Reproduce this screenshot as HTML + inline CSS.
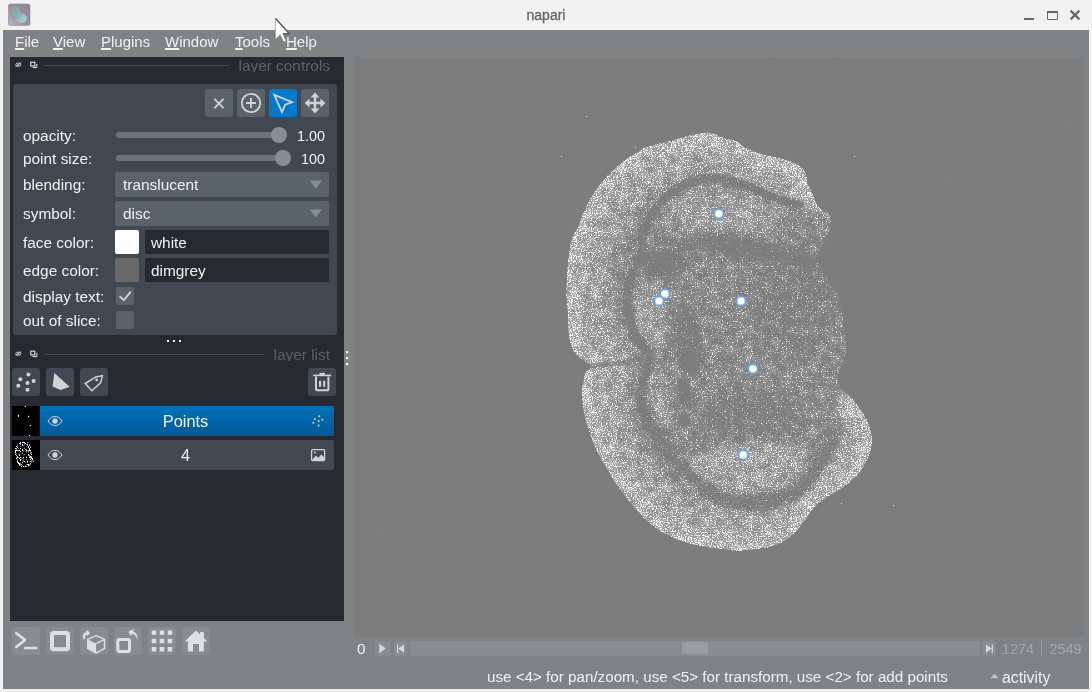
<!DOCTYPE html>
<html lang="en">
<head>
<meta charset="utf-8">
<title>napari</title>
<style>
*{box-sizing:border-box;margin:0;padding:0}
html,body{width:1092px;height:692px;overflow:hidden;background:#f2f2f2}
body{font-family:"Liberation Sans","DejaVu Sans",sans-serif;font-size:14px;color:#f0f1f2;position:relative}
.abs{position:absolute}
#titlebar{left:0;top:0;width:1092px;height:30px;background:#f2f2f2}
#title{left:0;top:6px;width:1092px;text-align:center;color:#666;font-size:14px;line-height:18px;-webkit-text-stroke:0.3px #666}
#win{left:3px;top:30px;width:1086px;height:659px;background:#818284}
.menu{top:33px;font-size:15px;line-height:18px;color:#f0f1f2;white-space:nowrap}
.menu u{text-decoration:underline;text-underline-offset:0.8px;text-decoration-thickness:1.6px}
#dock{left:10px;top:57px;width:334px;height:564px;background:#262930}
.docktitle{color:#5a626c;font-size:15.4px;line-height:18px;white-space:nowrap;text-align:right;height:14.5px;overflow:hidden}
.dline{height:1px;background:#414851}
#controls{left:13px;top:84px;width:324px;height:251px;background:#414851;border-radius:3px}
.lbl{font-size:15.4px;line-height:18px;color:#f0f1f2;white-space:nowrap}
.btn{width:28px;height:28px;background:#5a626c;border-radius:3px}
.lb{background:#414851}
.track{height:6px;background:#6a7380;border-radius:3px}
.handle{width:16px;height:16px;border-radius:8px;background:#868e93}
.combo{left:115px;width:214px;height:25px;background:#5a626c;border-radius:2px}
.edit{left:145px;width:184px;height:24px;background:#262930;border-radius:2px}
.swatch{left:115px;width:24px;height:24px;border-radius:2px}
.chk{left:116px;width:18px;height:18px;background:#5a626c;border-radius:2px}
.row{left:12px;width:322px;height:30px;border-radius:2px}
.thumb{left:12px;width:28px;height:30px;background:#000;overflow:hidden}
.vbtn{top:627px;width:28px;height:28px;background:#8a8b8d;border-radius:3px}
#canvas{left:354px;top:57px;width:730px;height:580px;background:#7d7d7d;overflow:hidden}
.dim{color:#a3a7ab}
.num{font-size:14.4px}
.st{font-size:15.2px}
.pb{top:641px;width:15px;height:15px;background:#8a8b8e;border-radius:2px}
</style>
</head>
<body>
<div id="root" class="abs" style="left:0;top:0;width:1092px;height:692px;will-change:transform;opacity:0.999">
<div id="titlebar" class="abs"></div>
<div id="title" class="abs">napari</div>
<div id="win" class="abs"></div>
<svg class="abs" style="left:0;top:0" width="1092" height="30" viewBox="0 0 1092 30">
<defs>
<linearGradient id="ig" x1="1" y1="0" x2="0" y2="1"><stop offset="0" stop-color="#8b8591"/><stop offset="0.6" stop-color="#9a94a2"/><stop offset="1" stop-color="#bdb5cb"/></linearGradient>
<linearGradient id="bg2" x1="0" y1="0" x2="1" y2="1"><stop offset="0" stop-color="#70a5a9"/><stop offset="0.5" stop-color="#87b6b8"/><stop offset="1" stop-color="#abe2e0"/></linearGradient>
</defs>
<rect x="8.5" y="4" width="21.5" height="21.5" rx="1.8" fill="url(#ig)" stroke="#8d8794" stroke-width="0.6"/>
<path d="M12 10.6C12 8.4 13.6 7.2 15.4 7.2C17.4 7.2 18.5 8.6 18.6 10.4C18.7 12.4 19.6 13.3 21.6 13.6C24.4 14 26.6 15.4 26.6 18.2C26.6 21 24.4 22.8 21.6 22.8C18.6 22.8 17.2 21.2 16.4 18.8C15.8 17 14.8 15.6 13.4 14.2C12.4 13.2 12 12 12 10.6Z" fill="url(#bg2)" stroke="#c3bda6" stroke-width="0.5"/>
<rect x="1024" y="18" width="10" height="2" fill="#686868"/>
<path d="M1047.5 11.5h10v8h-10z" stroke="#686868" stroke-width="1" fill="none"/><rect x="1047" y="11" width="11" height="2" fill="#686868"/>
<path d="M1070.6 10.6l8.8 8.8M1079.4 10.6l-8.8 8.8" stroke="#686868" stroke-width="2.2" fill="none"/>
</svg>

<!-- menubar -->
<div class="abs menu" style="left:15px"><u>F</u>ile</div>
<div class="abs menu" style="left:53px"><u>V</u>iew</div>
<div class="abs menu" style="left:101px"><u>P</u>lugins</div>
<div class="abs menu" style="left:165px"><u>W</u>indow</div>
<div class="abs menu" style="left:235px"><u>T</u>ools</div>
<div class="abs menu" style="left:286px"><u>H</u>elp</div>

<!-- dock -->
<div id="dock" class="abs"></div>
<svg class="abs" style="left:10px;top:57px" width="40" height="16" viewBox="0 0 40 16"><g id="dti"><ellipse cx="8.3" cy="7.7" rx="2.6" ry="1.6" stroke="#dcdddf" stroke-width="0.9" fill="none"/><circle cx="8.3" cy="7.7" r="0.8" fill="#dcdddf"/><path d="M5.6 9.6L11.2 5.6" stroke="#dcdddf" stroke-width="0.9"/><rect x="20.8" y="5.2" width="4" height="3.8" stroke="#e4e5e6" stroke-width="1.1" fill="none"/><path d="M22.6 10.6h4.2V6.8" stroke="#e4e5e6" stroke-width="1" fill="none"/></g></svg>
<div class="abs dline" style="left:44px;top:65px;width:185px"></div>
<div class="abs docktitle" style="left:200px;top:57px;width:130px">layer controls</div>
<div id="controls" class="abs"></div>

<div class="abs btn" style="left:205px;top:89px"><svg width="28" height="28" viewBox="0 0 28 28"><path d="M9.4 9.9l9.2 9.2M18.6 9.9l-9.2 9.2" stroke="#d1d2d4" stroke-width="1.9" fill="none"/></svg></div>
<div class="abs btn" style="left:237px;top:89px"><svg width="28" height="28" viewBox="0 0 28 28"><circle cx="14" cy="14" r="9.2" stroke="#d1d2d4" stroke-width="1.8" fill="none"/><path d="M14 9v10M9 14h10" stroke="#d1d2d4" stroke-width="1.9" fill="none"/></svg></div>
<div class="abs btn" style="left:269px;top:89px;background:#007acc"><svg width="28" height="28" viewBox="0 0 28 28"><path d="M5.2 5.8L23.2 13.1L16.2 15.6L13 23.2Z" stroke="#d1d2d4" stroke-width="1.8" fill="none" stroke-linejoin="miter"/></svg></div>
<div class="abs btn" style="left:301px;top:89px"><svg width="28" height="28" viewBox="0 0 28 28"><path d="M14 6v16M6 14h16" stroke="#d1d2d4" stroke-width="2.4" fill="none"/><path d="M14 3.6l4.4 5h-8.8zM14 24.4l4.4-5h-8.8zM3.6 14l5-4.4v8.8zM24.4 14l-5-4.4v8.8z" fill="#d1d2d4"/></svg></div>

<div class="abs lbl" style="left:23px;top:127px">opacity:</div>
<div class="abs track" style="left:116px;top:132px;width:170px"></div>
<div class="abs handle" style="left:271px;top:127px"></div>
<div class="abs lbl num" style="left:280px;top:127px;width:45px;text-align:right">1.00</div>

<div class="abs lbl" style="left:23px;top:150px">point size:</div>
<div class="abs track" style="left:116px;top:155px;width:170px"></div>
<div class="abs handle" style="left:275px;top:150px"></div>
<div class="abs lbl num" style="left:280px;top:150px;width:45px;text-align:right">100</div>

<div class="abs lbl" style="left:23px;top:176px">blending:</div>
<div class="abs combo" style="top:172px"><svg class="abs" style="left:194px;top:8px" width="14" height="9" viewBox="0 0 14 9"><path d="M0.6 0.4h12.4L6.8 8.6z" fill="#868e93"/></svg></div>
<div class="abs lbl" style="left:123px;top:176px">translucent</div>

<div class="abs lbl" style="left:23px;top:205px">symbol:</div>
<div class="abs combo" style="top:201px"><svg class="abs" style="left:194px;top:8px" width="14" height="9" viewBox="0 0 14 9"><path d="M0.6 0.4h12.4L6.8 8.6z" fill="#868e93"/></svg></div>
<div class="abs lbl" style="left:123px;top:205px">disc</div>

<div class="abs lbl" style="left:23px;top:234px">face color:</div>
<div class="abs swatch" style="top:230px;background:#fff"></div>
<div class="abs edit" style="top:230px"></div>
<div class="abs lbl" style="left:151px;top:234px">white</div>

<div class="abs lbl" style="left:23px;top:262px">edge color:</div>
<div class="abs swatch" style="top:258px;background:#696969"></div>
<div class="abs edit" style="top:258px"></div>
<div class="abs lbl" style="left:151px;top:262px">dimgrey</div>

<div class="abs lbl" style="left:23px;top:288px">display text:</div>
<div class="abs chk" style="top:287px"><svg width="18" height="18" viewBox="0 0 18 18"><path d="M3.6 9.2L7.8 13.2L14.8 4.6" stroke="#d1d2d4" stroke-width="1.9" fill="none"/></svg></div>
<div class="abs lbl" style="left:23px;top:312px">out of slice:</div>
<div class="abs chk" style="top:311px"></div>

<svg class="abs" style="left:10px;top:346px" width="40" height="16" viewBox="0 0 40 16"><use href="#dti"/></svg>
<div class="abs dline" style="left:44px;top:354px;width:220px"></div>
<svg class="abs" style="left:165px;top:338px" width="20" height="6" viewBox="0 0 20 6" fill="#f0f1f2"><rect x="2" y="2" width="2" height="2"/><rect x="8" y="2" width="2" height="2"/><rect x="14" y="2" width="2" height="2"/></svg>
<svg class="abs" style="left:345px;top:350px" width="6" height="18" viewBox="0 0 6 18" fill="#ffffff"><rect x="1" y="1" width="2.2" height="2.2"/><rect x="1" y="7" width="2.2" height="2.2"/><rect x="1" y="13" width="2.2" height="2.2"/></svg>
<div class="abs docktitle" style="left:200px;top:346px;width:130px">layer list</div>

<div class="abs btn lb" style="left:12px;top:368px"><svg width="28" height="28" viewBox="0 0 28 28" fill="#d1d2d4"><circle cx="16.4" cy="6.6" r="2"/><circle cx="8.4" cy="11.3" r="2"/><circle cx="21.6" cy="13" r="2"/><circle cx="15.5" cy="14.9" r="2"/><circle cx="6.3" cy="17.7" r="2"/><circle cx="15.5" cy="21.8" r="2"/></svg></div>
<div class="abs btn lb" style="left:46px;top:368px"><svg width="28" height="28" viewBox="0 0 28 28"><path d="M8.4 5.1L23.6 18.7L14.5 22.1L6.5 18.4Z" fill="#d1d2d4"/></svg></div>
<div class="abs btn lb" style="left:80px;top:368px"><svg width="28" height="28" viewBox="0 0 28 28"><path d="M22.4 7.6L20.6 14.9L11.8 22.8L5.2 15.5L15.9 8.9Z" stroke="#d1d2d4" stroke-width="1.5" fill="none"/><circle cx="16.7" cy="11.9" r="1.3" fill="#d1d2d4"/></svg></div>
<div class="abs btn lb" style="left:308px;top:368px"><svg width="28" height="28" viewBox="0 0 28 28"><path d="M5.2 7.4h17.9" stroke="#d1d2d4" stroke-width="1.6"/><rect x="11.4" y="4.9" width="5.6" height="2" fill="#d1d2d4"/><path d="M8 8.4v12.3a1.6 1.6 0 0 0 1.6 1.6h9.2a1.6 1.6 0 0 0 1.6-1.6V8.4" stroke="#d1d2d4" stroke-width="2" fill="none"/><rect x="11" y="12.8" width="2.1" height="6" fill="#d1d2d4"/><rect x="15.1" y="12.8" width="2.1" height="6" fill="#d1d2d4"/></svg></div>

<div class="abs row" style="top:406px;background:linear-gradient(#0070b8,#0067aa 45%,#005a96)"></div>
<div class="abs thumb" style="top:406px"><svg width="28" height="30" viewBox="0 0 28 30" fill="#fff"><rect x="12.8" y="0" width="1.2" height="1"/><rect x="5.8" y="8.8" width="1.2" height="2"/><rect x="16" y="9.8" width="1.2" height="1.2"/><rect x="17.8" y="19" width="1.2" height="1.2"/><rect x="16.8" y="29" width="1.2" height="1"/></svg></div>
<svg class="abs eye" style="left:47px;top:415px" width="16" height="12" viewBox="0 0 16 12"><g id="eye"><path d="M1 6C3 2.6 5.4 1.5 8 1.5S13 2.6 15 6C13 9.4 10.600000000000001 10.5 8 10.5S3 9.4 1 6Z" stroke="#d1d2d4" stroke-width="1" fill="none"/><circle cx="8" cy="6" r="2.7" fill="#d1d2d4"/></g></svg>
<div class="abs lbl" style="left:40px;top:411px;width:291px;text-align:center;font-size:16.4px;line-height:20px">Points</div>
<svg class="abs" style="left:311px;top:414px" width="14" height="14" viewBox="0 0 14 14" fill="#d1d2d4"><circle cx="8.2" cy="2.2" r="1"/><circle cx="3.8" cy="5" r="1"/><circle cx="11.4" cy="5.8" r="1"/><circle cx="7.6" cy="7" r="1"/><circle cx="2.4" cy="8.8" r="1"/><circle cx="7.6" cy="11.4" r="1"/></svg>
<div class="abs row" style="top:440px;background:#414851"></div>
<div class="abs thumb" style="top:440px" id="thumb2"><svg width="28" height="30" viewBox="0 0 28 30"><defs><filter id="tsp" x="0" y="0" width="28" height="30" filterUnits="userSpaceOnUse" color-interpolation-filters="sRGB"><feColorMatrix in="SourceGraphic" type="matrix" values="0 0 0 0 1  0 0 0 0 1  0 0 0 0 1  1 0 0 0 0" result="D"/><feTurbulence type="fractalNoise" baseFrequency="0.85" numOctaves="2" seed="4" result="t"/><feColorMatrix in="t" type="matrix" values="0 0 0 0 1  0 0 0 0 1  0 0 0 0 1  0 0 0 1 0" result="N"/><feComposite in="D" in2="N" operator="arithmetic" k1="0" k2="1" k3="1" k4="-1" result="S"/><feComponentTransfer in="S"><feFuncA type="linear" slope="6" intercept="0"/></feComponentTransfer></filter></defs><g filter="url(#tsp)"><rect width="28" height="30" fill="#303030"/><g transform="translate(-32.7 -6.8) scale(0.0625)"><path d="M685.3 136.3C693.5 134.1 689.7 134.6 698.5 133.5C707.3 132.4 703.4 131.4 711.7 132.9C720.0 134.4 715.5 135.3 723.5 138.0C731.5 140.7 727.9 137.5 735.7 141.0C743.5 144.5 738.2 144.1 747.0 148.5C755.8 152.9 751.3 151.1 762.0 154.2C772.7 157.3 769.0 155.4 779.0 157.9C789.0 160.4 784.3 158.2 792.1 161.7C799.9 165.2 797.7 163.6 802.4 168.3C807.1 173.0 804.3 170.2 806.2 175.8C808.1 181.4 805.9 178.9 808.1 185.2C810.3 191.5 810.0 188.3 812.8 194.6C815.6 200.9 813.4 198.7 816.5 204.0C819.6 209.3 817.8 206.8 822.2 210.6C826.6 214.4 827.1 210.0 829.7 215.3C832.3 220.6 830.3 220.9 830.0 226.5C829.7 232.1 830.8 227.1 828.8 232.0C826.8 236.9 828.1 233.2 824.0 241.3C819.9 249.4 817.7 246.9 816.5 256.3C815.3 265.7 815.9 260.7 820.3 269.5C824.7 278.3 823.7 273.2 829.7 282.6C835.7 292.0 834.1 287.0 838.2 297.7C842.3 308.4 839.7 302.1 841.9 314.6C844.1 327.1 843.4 323.5 844.7 335.3C846.0 347.1 846.3 341.3 845.7 350.0C845.1 358.7 845.4 353.2 842.9 361.3C840.4 369.4 839.5 366.3 838.2 374.4C836.9 382.5 835.7 378.8 839.1 385.7C842.5 392.6 841.6 387.6 848.5 395.1C855.4 402.6 853.2 398.9 859.8 408.3C866.4 417.7 864.1 413.3 868.2 423.3C872.3 433.3 871.3 429.0 872.0 438.3C872.7 447.6 872.8 442.6 870.4 451.3C868.0 460.0 869.7 455.6 864.7 464.4C859.7 473.2 863.4 469.4 855.3 477.6C847.2 485.8 850.3 482.0 840.3 488.9C830.3 495.8 834.1 492.0 825.3 498.3C816.5 504.6 820.9 500.2 814.0 507.7C807.1 515.2 810.9 512.7 804.6 520.8C798.3 528.9 802.7 524.9 795.2 532.1C787.7 539.3 792.7 537.1 782.0 542.4C771.3 547.7 776.3 545.4 763.2 548.1C750.1 550.8 752.7 549.7 742.6 550.5C732.5 551.3 743.0 551.5 732.9 550.6C722.8 549.7 726.0 549.9 712.2 547.7C698.4 545.5 705.3 547.7 691.5 544.0C677.7 540.3 684.0 542.8 670.8 536.5C657.6 530.2 663.9 534.6 652.0 525.2C640.1 515.8 645.8 520.2 635.1 508.3C624.4 496.4 629.4 502.7 620.0 489.5C610.6 476.3 614.6 481.5 606.9 468.8C599.2 456.1 602.8 463.5 597.0 451.5C591.2 439.5 593.9 445.9 589.5 432.7C585.1 419.5 586.3 425.8 583.8 412.0C581.3 398.2 581.7 403.9 582.0 391.4C582.3 378.9 582.0 382.9 584.8 374.4C587.6 365.9 592.0 371.6 590.4 366.0C588.8 360.4 585.8 362.8 580.0 357.5C574.2 352.2 576.7 357.4 573.0 350.0C569.3 342.6 570.5 347.1 568.8 335.3C567.1 323.5 568.7 327.8 567.9 314.6C567.1 301.4 566.8 308.3 566.5 295.8C566.2 283.3 565.8 292.7 566.9 277.0C568.0 261.3 567.5 262.8 569.7 248.8C571.9 234.8 570.7 242.4 573.5 235.0C576.3 227.6 575.1 233.4 578.2 226.5C581.3 219.6 579.1 223.1 582.9 214.3C586.7 205.5 584.5 209.3 589.5 200.2C594.5 191.1 591.6 195.5 597.9 187.0C604.2 178.5 601.1 182.3 608.3 174.8C615.5 167.3 611.4 171.1 619.5 164.5C627.6 157.9 623.9 160.7 632.7 155.1C641.5 149.5 636.5 151.7 645.9 147.6C655.3 143.5 651.5 145.4 660.9 142.9C670.3 140.4 665.9 142.2 674.0 140.0C682.1 137.8 677.1 138.5 685.3 136.3Z" fill="#7a7a7a"/><path d="M685.3 136.3C693.5 134.1 689.7 134.6 698.5 133.5C707.3 132.4 703.4 131.4 711.7 132.9C720.0 134.4 715.5 135.3 723.5 138.0C731.5 140.7 727.9 137.5 735.7 141.0C743.5 144.5 738.2 144.1 747.0 148.5C755.8 152.9 751.3 151.1 762.0 154.2C772.7 157.3 769.0 155.4 779.0 157.9C789.0 160.4 784.3 158.2 792.1 161.7C799.9 165.2 797.7 163.6 802.4 168.3C807.1 173.0 804.3 170.2 806.2 175.8C808.1 181.4 805.9 178.9 808.1 185.2C810.3 191.5 810.0 188.3 812.8 194.6C815.6 200.9 813.4 198.7 816.5 204.0C819.6 209.3 817.8 206.8 822.2 210.6C826.6 214.4 827.1 210.0 829.7 215.3C832.3 220.6 830.3 220.9 830.0 226.5C829.7 232.1 830.8 227.1 828.8 232.0C826.8 236.9 828.1 233.2 824.0 241.3C819.9 249.4 817.7 246.9 816.5 256.3C815.3 265.7 815.9 260.7 820.3 269.5C824.7 278.3 823.7 273.2 829.7 282.6C835.7 292.0 834.1 287.0 838.2 297.7C842.3 308.4 839.7 302.1 841.9 314.6C844.1 327.1 843.4 323.5 844.7 335.3C846.0 347.1 846.3 341.3 845.7 350.0C845.1 358.7 845.4 353.2 842.9 361.3C840.4 369.4 839.5 366.3 838.2 374.4C836.9 382.5 835.7 378.8 839.1 385.7C842.5 392.6 841.6 387.6 848.5 395.1C855.4 402.6 853.2 398.9 859.8 408.3C866.4 417.7 864.1 413.3 868.2 423.3C872.3 433.3 871.3 429.0 872.0 438.3C872.7 447.6 872.8 442.6 870.4 451.3C868.0 460.0 869.7 455.6 864.7 464.4C859.7 473.2 863.4 469.4 855.3 477.6C847.2 485.8 850.3 482.0 840.3 488.9C830.3 495.8 834.1 492.0 825.3 498.3C816.5 504.6 820.9 500.2 814.0 507.7C807.1 515.2 810.9 512.7 804.6 520.8C798.3 528.9 802.7 524.9 795.2 532.1C787.7 539.3 792.7 537.1 782.0 542.4C771.3 547.7 776.3 545.4 763.2 548.1C750.1 550.8 752.7 549.7 742.6 550.5C732.5 551.3 743.0 551.5 732.9 550.6C722.8 549.7 726.0 549.9 712.2 547.7C698.4 545.5 705.3 547.7 691.5 544.0C677.7 540.3 684.0 542.8 670.8 536.5C657.6 530.2 663.9 534.6 652.0 525.2C640.1 515.8 645.8 520.2 635.1 508.3C624.4 496.4 629.4 502.7 620.0 489.5C610.6 476.3 614.6 481.5 606.9 468.8C599.2 456.1 602.8 463.5 597.0 451.5C591.2 439.5 593.9 445.9 589.5 432.7C585.1 419.5 586.3 425.8 583.8 412.0C581.3 398.2 581.7 403.9 582.0 391.4C582.3 378.9 582.0 382.9 584.8 374.4C587.6 365.9 592.0 371.6 590.4 366.0C588.8 360.4 585.8 362.8 580.0 357.5C574.2 352.2 576.7 357.4 573.0 350.0C569.3 342.6 570.5 347.1 568.8 335.3C567.1 323.5 568.7 327.8 567.9 314.6C567.1 301.4 566.8 308.3 566.5 295.8C566.2 283.3 565.8 292.7 566.9 277.0C568.0 261.3 567.5 262.8 569.7 248.8C571.9 234.8 570.7 242.4 573.5 235.0C576.3 227.6 575.1 233.4 578.2 226.5C581.3 219.6 579.1 223.1 582.9 214.3C586.7 205.5 584.5 209.3 589.5 200.2C594.5 191.1 591.6 195.5 597.9 187.0C604.2 178.5 601.1 182.3 608.3 174.8C615.5 167.3 611.4 171.1 619.5 164.5C627.6 157.9 623.9 160.7 632.7 155.1C641.5 149.5 636.5 151.7 645.9 147.6C655.3 143.5 651.5 145.4 660.9 142.9C670.3 140.4 665.9 142.2 674.0 140.0C682.1 137.8 677.1 138.5 685.3 136.3Z" fill="none" stroke="#a0a0a0" stroke-width="44" clip-path="url(#bc)"/></g></g></svg></div>
<svg class="abs eye" style="left:47px;top:449px" width="16" height="12" viewBox="0 0 16 12"><use href="#eye"/></svg>
<div class="abs lbl" style="left:40px;top:445px;width:291px;text-align:center;font-size:16.4px;line-height:20px">4</div>
<svg class="abs" style="left:310px;top:448px" width="16" height="14" viewBox="0 0 16 14"><rect x="1.6" y="1.6" width="13" height="11" rx="1" stroke="#d1d2d4" stroke-width="1.3" fill="none"/><path d="M2.4 11.6L6 7.6L8.2 9.8L11.4 6.4L14 9.2V12H2.4Z" fill="#d1d2d4"/><circle cx="5" cy="4.6" r="1" fill="#d1d2d4"/></svg>

<!-- viewer buttons -->
<div class="abs vbtn" style="left:12px"><svg width="28" height="28" viewBox="0 0 28 28"><path d="M4.3 6.2L13 12.9L4.3 20M13.2 21h11" stroke="#dedfe0" stroke-width="2.6" fill="none" stroke-linecap="round" stroke-linejoin="round"/></svg></div>
<div class="abs vbtn" style="left:46px"><svg width="28" height="28" viewBox="0 0 28 28"><rect x="6" y="6" width="16" height="16.2" rx="1.5" stroke="#dedfe0" stroke-width="4" fill="none"/></svg></div>
<div class="abs vbtn" style="left:80px"><svg width="28" height="28" viewBox="0 0 28 28"><path d="M16.1 8.6L24.5 12.4V21.4L16.1 26.1L7.7 21.4V12.4Z" stroke="#dedfe0" stroke-width="1.5" fill="none" stroke-linejoin="round"/><path d="M7.7 12.4L16.1 16.6V26.1L7.7 21.4Z" fill="#dedfe0"/><path d="M16.1 16.6L24.5 12.4" stroke="#dedfe0" stroke-width="1.5"/><path d="M3.6 12.4C1.6 8.5 3.4 6 6.4 5.3L5.9 2.8L10.2 5.6L7.6 9.2L7 7.4C5.4 8 4.6 9.4 5.2 11.7Z" fill="#dedfe0"/></svg></div>
<div class="abs vbtn" style="left:114px"><svg width="28" height="28" viewBox="0 0 28 28"><rect x="3.8" y="12.5" width="11.7" height="11.9" rx="1.5" stroke="#dedfe0" stroke-width="3" fill="none"/><path d="M23.5 13.2C22.6 9.4 20.6 7.6 17.9 6.6L17 9.6L14.4 4.6L20 1.9L19 4.6C22.6 6 24.2 9 23.5 13.2Z" fill="#dedfe0"/></svg></div>
<div class="abs vbtn" style="left:148px"><svg width="28" height="28" viewBox="0 0 28 28" fill="#dedfe0"><rect x="3.7" y="3.4" width="4.5" height="4.5"/><rect x="11.7" y="3.4" width="4.5" height="4.5"/><rect x="19.7" y="3.4" width="4.5" height="4.5"/><rect x="3.7" y="11.8" width="4.5" height="4.5"/><rect x="11.7" y="11.8" width="4.5" height="4.5"/><rect x="19.7" y="11.8" width="4.5" height="4.5"/><rect x="3.7" y="20" width="4.5" height="4.5"/><rect x="11.7" y="20" width="4.5" height="4.5"/><rect x="19.7" y="20" width="4.5" height="4.5"/></svg></div>
<div class="abs vbtn" style="left:182px"><svg width="28" height="28" viewBox="0 0 28 28"><path d="M13.9 3.4L18 7.3V5.6a.7.7 0 0 1 .7-.7h2.6a.7.7 0 0 1 .7.7v5.6L24.5 13.6a.5.5 0 0 1-.3.9H21.9V23.6a1 1 0 0 1-1 1H17V17.1H11V24.6H6.9a1 1 0 0 1-1-1V14.5H3.8a.5.5 0 0 1-.3-.9Z" fill="#dedfe0"/></svg></div>

<!-- canvas -->
<div id="canvas" class="abs">
<svg class="abs" style="left:0;top:0" width="730" height="580" viewBox="354 57 730 580">
<defs>
<clipPath id="bc"><path d="M685.3 136.3C689.4 135.2 694.1 134.1 698.5 133.5C702.9 132.9 707.5 132.2 711.7 132.9C715.9 133.7 719.5 136.7 723.5 138.0C727.5 139.3 731.8 139.2 735.7 141.0C739.6 142.8 742.6 146.3 747.0 148.5C751.4 150.7 756.7 152.6 762.0 154.2C767.3 155.8 774.0 156.7 779.0 157.9C784.0 159.2 788.2 160.0 792.1 161.7C796.0 163.4 800.0 166.0 802.4 168.3C804.8 170.7 805.2 173.0 806.2 175.8C807.2 178.6 807.0 182.1 808.1 185.2C809.2 188.3 811.4 191.5 812.8 194.6C814.2 197.7 814.9 201.3 816.5 204.0C818.1 206.7 820.0 208.7 822.2 210.6C824.4 212.5 828.4 212.7 829.7 215.3C831.0 218.0 830.1 223.7 830.0 226.5C829.9 229.3 829.8 229.5 828.8 232.0C827.8 234.5 826.0 237.2 824.0 241.3C822.0 245.4 817.1 251.6 816.5 256.3C815.9 261.0 818.1 265.1 820.3 269.5C822.5 273.9 826.7 277.9 829.7 282.6C832.7 287.3 836.2 292.4 838.2 297.7C840.2 303.0 840.8 308.3 841.9 314.6C843.0 320.9 844.1 329.4 844.7 335.3C845.3 341.2 846.0 345.7 845.7 350.0C845.4 354.3 844.1 357.2 842.9 361.3C841.6 365.4 838.8 370.3 838.2 374.4C837.6 378.5 837.4 382.2 839.1 385.7C840.8 389.1 845.0 391.3 848.5 395.1C852.0 398.9 856.5 403.6 859.8 408.3C863.1 413.0 866.2 418.3 868.2 423.3C870.2 428.3 871.6 433.6 872.0 438.3C872.4 443.0 871.6 447.0 870.4 451.3C869.2 455.6 867.2 460.0 864.7 464.4C862.2 468.8 859.4 473.5 855.3 477.6C851.2 481.7 845.3 485.4 840.3 488.9C835.3 492.3 829.7 495.2 825.3 498.3C820.9 501.4 817.5 503.9 814.0 507.7C810.5 511.4 807.7 516.7 804.6 520.8C801.5 524.9 799.0 528.5 795.2 532.1C791.4 535.7 787.3 539.7 782.0 542.4C776.7 545.1 769.8 546.8 763.2 548.1C756.6 549.5 747.7 550.1 742.6 550.5C737.5 550.9 738.0 551.1 732.9 550.6C727.8 550.1 719.1 548.8 712.2 547.7C705.3 546.6 698.4 545.9 691.5 544.0C684.6 542.1 677.4 539.6 670.8 536.5C664.2 533.4 658.0 529.9 652.0 525.2C646.0 520.5 640.4 514.2 635.1 508.3C629.8 502.4 624.7 496.1 620.0 489.5C615.3 482.9 610.7 475.1 606.9 468.8C603.1 462.5 599.9 457.5 597.0 451.5C594.1 445.5 591.7 439.3 589.5 432.7C587.3 426.1 585.0 418.9 583.8 412.0C582.5 405.1 581.8 397.7 582.0 391.4C582.2 385.1 583.4 378.6 584.8 374.4C586.2 370.2 591.2 368.8 590.4 366.0C589.6 363.2 582.9 360.2 580.0 357.5C577.1 354.8 574.9 353.7 573.0 350.0C571.1 346.3 569.6 341.2 568.8 335.3C567.9 329.4 568.3 321.2 567.9 314.6C567.5 308.0 566.7 302.1 566.5 295.8C566.3 289.5 566.4 284.8 566.9 277.0C567.4 269.2 568.6 255.8 569.7 248.8C570.8 241.8 572.1 238.7 573.5 235.0C574.9 231.3 576.6 229.9 578.2 226.5C579.8 223.1 581.0 218.7 582.9 214.3C584.8 209.9 587.0 204.8 589.5 200.2C592.0 195.6 594.8 191.2 597.9 187.0C601.0 182.8 604.7 178.6 608.3 174.8C611.9 171.1 615.4 167.8 619.5 164.5C623.6 161.2 628.3 157.9 632.7 155.1C637.1 152.3 641.2 149.6 645.9 147.6C650.6 145.6 656.2 144.2 660.9 142.9C665.6 141.6 669.9 141.1 674.0 140.0C678.1 138.9 681.2 137.4 685.3 136.3Z"/></clipPath>
<filter id="b2" x="-30%" y="-30%" width="160%" height="160%" color-interpolation-filters="sRGB"><feGaussianBlur stdDeviation="1.6"/></filter>
<filter id="b3" x="-30%" y="-30%" width="160%" height="160%" color-interpolation-filters="sRGB"><feGaussianBlur stdDeviation="3"/></filter>
<filter id="b5" x="-30%" y="-30%" width="160%" height="160%" color-interpolation-filters="sRGB"><feGaussianBlur stdDeviation="6"/></filter>
<filter id="sp" x="354" y="57" width="730" height="580" filterUnits="userSpaceOnUse" color-interpolation-filters="sRGB">
<feColorMatrix in="SourceGraphic" type="matrix" values="0 0 0 0 1  0 0 0 0 1  0 0 0 0 1  1 0 0 0 0" result="D"/>
<feTurbulence type="fractalNoise" baseFrequency="0.8" numOctaves="3" seed="7" result="t"/>
<feColorMatrix in="t" type="matrix" values="0 0 0 0 1  0 0 0 0 1  0 0 0 0 1  0 0 0 1 0" result="N"/>
<feTurbulence type="fractalNoise" baseFrequency="0.11" numOctaves="2" seed="11" result="t2"/>
<feColorMatrix in="t2" type="matrix" values="0 0 0 0 1  0 0 0 0 1  0 0 0 0 1  0 0 0 0.2 0" result="N2"/>
<feComposite in="D" in2="N2" operator="arithmetic" k1="0" k2="1" k3="1" k4="-0.1" result="D2"/>
<feComposite in="D2" in2="N" operator="arithmetic" k1="0" k2="1" k3="1" k4="-1.05" result="S"/>
<feComponentTransfer in="S" result="P"><feFuncA type="table" tableValues="0 0.15 0.5 1 1 1 1 1 1 1 1"/></feComponentTransfer>
<feComponentTransfer in="D2" result="H"><feFuncA type="linear" slope="1.2" intercept="-0.6"/></feComponentTransfer>
<feComposite in="H" in2="P" operator="arithmetic" k1="0" k2="1" k3="1" k4="0" result="HP"/>
<feGaussianBlur in="HP" stdDeviation="0.4"/>
</filter>
</defs>
<g filter="url(#sp)">
<rect x="354" y="57" width="730" height="580" fill="#262626"/>
<g clip-path="url(#bc)">
<rect x="540" y="110" width="360" height="470" fill="#8a8a8a"/>
<path d="M685.3 136.3C689.4 135.2 694.1 134.1 698.5 133.5C702.9 132.9 707.5 132.2 711.7 132.9C715.9 133.7 719.5 136.7 723.5 138.0C727.5 139.3 731.8 139.2 735.7 141.0C739.6 142.8 742.6 146.3 747.0 148.5C751.4 150.7 756.7 152.6 762.0 154.2C767.3 155.8 774.0 156.7 779.0 157.9C784.0 159.2 788.2 160.0 792.1 161.7C796.0 163.4 800.0 166.0 802.4 168.3C804.8 170.7 805.2 173.0 806.2 175.8C807.2 178.6 807.0 182.1 808.1 185.2C809.2 188.3 811.4 191.5 812.8 194.6C814.2 197.7 814.9 201.3 816.5 204.0C818.1 206.7 820.0 208.7 822.2 210.6C824.4 212.5 828.4 212.7 829.7 215.3C831.0 218.0 830.1 223.7 830.0 226.5C829.9 229.3 829.8 229.5 828.8 232.0C827.8 234.5 826.0 237.2 824.0 241.3C822.0 245.4 817.1 251.6 816.5 256.3C815.9 261.0 818.1 265.1 820.3 269.5C822.5 273.9 826.7 277.9 829.7 282.6C832.7 287.3 836.2 292.4 838.2 297.7C840.2 303.0 840.8 308.3 841.9 314.6C843.0 320.9 844.1 329.4 844.7 335.3C845.3 341.2 846.0 345.7 845.7 350.0C845.4 354.3 844.1 357.2 842.9 361.3C841.6 365.4 838.8 370.3 838.2 374.4C837.6 378.5 837.4 382.2 839.1 385.7C840.8 389.1 845.0 391.3 848.5 395.1C852.0 398.9 856.5 403.6 859.8 408.3C863.1 413.0 866.2 418.3 868.2 423.3C870.2 428.3 871.6 433.6 872.0 438.3C872.4 443.0 871.6 447.0 870.4 451.3C869.2 455.6 867.2 460.0 864.7 464.4C862.2 468.8 859.4 473.5 855.3 477.6C851.2 481.7 845.3 485.4 840.3 488.9C835.3 492.3 829.7 495.2 825.3 498.3C820.9 501.4 817.5 503.9 814.0 507.7C810.5 511.4 807.7 516.7 804.6 520.8C801.5 524.9 799.0 528.5 795.2 532.1C791.4 535.7 787.3 539.7 782.0 542.4C776.7 545.1 769.8 546.8 763.2 548.1C756.6 549.5 747.7 550.1 742.6 550.5C737.5 550.9 738.0 551.1 732.9 550.6C727.8 550.1 719.1 548.8 712.2 547.7C705.3 546.6 698.4 545.9 691.5 544.0C684.6 542.1 677.4 539.6 670.8 536.5C664.2 533.4 658.0 529.9 652.0 525.2C646.0 520.5 640.4 514.2 635.1 508.3C629.8 502.4 624.7 496.1 620.0 489.5C615.3 482.9 610.7 475.1 606.9 468.8C603.1 462.5 599.9 457.5 597.0 451.5C594.1 445.5 591.7 439.3 589.5 432.7C587.3 426.1 585.0 418.9 583.8 412.0C582.5 405.1 581.8 397.7 582.0 391.4C582.2 385.1 583.4 378.6 584.8 374.4C586.2 370.2 591.2 368.8 590.4 366.0C589.6 363.2 582.9 360.2 580.0 357.5C577.1 354.8 574.9 353.7 573.0 350.0C571.1 346.3 569.6 341.2 568.8 335.3C567.9 329.4 568.3 321.2 567.9 314.6C567.5 308.0 566.7 302.1 566.5 295.8C566.3 289.5 566.4 284.8 566.9 277.0C567.4 269.2 568.6 255.8 569.7 248.8C570.8 241.8 572.1 238.7 573.5 235.0C574.9 231.3 576.6 229.9 578.2 226.5C579.8 223.1 581.0 218.7 582.9 214.3C584.8 209.9 587.0 204.8 589.5 200.2C592.0 195.6 594.8 191.2 597.9 187.0C601.0 182.8 604.7 178.6 608.3 174.8C611.9 171.1 615.4 167.8 619.5 164.5C623.6 161.2 628.3 157.9 632.7 155.1C637.1 152.3 641.2 149.6 645.9 147.6C650.6 145.6 656.2 144.2 660.9 142.9C665.6 141.6 669.9 141.1 674.0 140.0C678.1 138.9 681.2 137.4 685.3 136.3Z" fill="none" stroke="#9d9d9d" stroke-width="86" filter="url(#b5)"/>
<path d="M685.3 136.3C689.4 135.2 694.1 134.1 698.5 133.5C702.9 132.9 707.5 132.2 711.7 132.9C715.9 133.7 719.5 136.7 723.5 138.0C727.5 139.3 731.8 139.2 735.7 141.0C739.6 142.8 742.6 146.3 747.0 148.5C751.4 150.7 756.7 152.6 762.0 154.2C767.3 155.8 774.0 156.7 779.0 157.9C784.0 159.2 788.2 160.0 792.1 161.7C796.0 163.4 800.0 166.0 802.4 168.3C804.8 170.7 805.2 173.0 806.2 175.8C807.2 178.6 807.0 182.1 808.1 185.2C809.2 188.3 811.4 191.5 812.8 194.6C814.2 197.7 814.9 201.3 816.5 204.0C818.1 206.7 820.0 208.7 822.2 210.6C824.4 212.5 828.4 212.7 829.7 215.3C831.0 218.0 830.1 223.7 830.0 226.5C829.9 229.3 829.8 229.5 828.8 232.0C827.8 234.5 826.0 237.2 824.0 241.3C822.0 245.4 817.1 251.6 816.5 256.3C815.9 261.0 818.1 265.1 820.3 269.5C822.5 273.9 826.7 277.9 829.7 282.6C832.7 287.3 836.2 292.4 838.2 297.7C840.2 303.0 840.8 308.3 841.9 314.6C843.0 320.9 844.1 329.4 844.7 335.3C845.3 341.2 846.0 345.7 845.7 350.0C845.4 354.3 844.1 357.2 842.9 361.3C841.6 365.4 838.8 370.3 838.2 374.4C837.6 378.5 837.4 382.2 839.1 385.7C840.8 389.1 845.0 391.3 848.5 395.1C852.0 398.9 856.5 403.6 859.8 408.3C863.1 413.0 866.2 418.3 868.2 423.3C870.2 428.3 871.6 433.6 872.0 438.3C872.4 443.0 871.6 447.0 870.4 451.3C869.2 455.6 867.2 460.0 864.7 464.4C862.2 468.8 859.4 473.5 855.3 477.6C851.2 481.7 845.3 485.4 840.3 488.9C835.3 492.3 829.7 495.2 825.3 498.3C820.9 501.4 817.5 503.9 814.0 507.7C810.5 511.4 807.7 516.7 804.6 520.8C801.5 524.9 799.0 528.5 795.2 532.1C791.4 535.7 787.3 539.7 782.0 542.4C776.7 545.1 769.8 546.8 763.2 548.1C756.6 549.5 747.7 550.1 742.6 550.5C737.5 550.9 738.0 551.1 732.9 550.6C727.8 550.1 719.1 548.8 712.2 547.7C705.3 546.6 698.4 545.9 691.5 544.0C684.6 542.1 677.4 539.6 670.8 536.5C664.2 533.4 658.0 529.9 652.0 525.2C646.0 520.5 640.4 514.2 635.1 508.3C629.8 502.4 624.7 496.1 620.0 489.5C615.3 482.9 610.7 475.1 606.9 468.8C603.1 462.5 599.9 457.5 597.0 451.5C594.1 445.5 591.7 439.3 589.5 432.7C587.3 426.1 585.0 418.9 583.8 412.0C582.5 405.1 581.8 397.7 582.0 391.4C582.2 385.1 583.4 378.6 584.8 374.4C586.2 370.2 591.2 368.8 590.4 366.0C589.6 363.2 582.9 360.2 580.0 357.5C577.1 354.8 574.9 353.7 573.0 350.0C571.1 346.3 569.6 341.2 568.8 335.3C567.9 329.4 568.3 321.2 567.9 314.6C567.5 308.0 566.7 302.1 566.5 295.8C566.3 289.5 566.4 284.8 566.9 277.0C567.4 269.2 568.6 255.8 569.7 248.8C570.8 241.8 572.1 238.7 573.5 235.0C574.9 231.3 576.6 229.9 578.2 226.5C579.8 223.1 581.0 218.7 582.9 214.3C584.8 209.9 587.0 204.8 589.5 200.2C592.0 195.6 594.8 191.2 597.9 187.0C601.0 182.8 604.7 178.6 608.3 174.8C611.9 171.1 615.4 167.8 619.5 164.5C623.6 161.2 628.3 157.9 632.7 155.1C637.1 152.3 641.2 149.6 645.9 147.6C650.6 145.6 656.2 144.2 660.9 142.9C665.6 141.6 669.9 141.1 674.0 140.0C678.1 138.9 681.2 137.4 685.3 136.3Z" fill="none" stroke="#aaaaaa" stroke-width="26" filter="url(#b5)"/>
<path d="M642.0 257.0C644.3 250.2 641.4 246.4 642.4 240.4C643.4 234.4 645.1 227.1 647.9 221.2C650.6 215.2 654.3 210.0 658.9 204.7C663.5 199.4 669.0 193.7 675.4 189.6C681.8 185.5 690.1 181.8 697.4 180.0C704.7 178.2 712.0 177.9 719.3 178.6C726.6 179.3 734.4 181.8 741.3 184.1C748.2 186.4 754.1 189.8 760.5 192.3C766.9 194.8 773.4 197.1 779.8 199.2C786.2 201.3 793.6 202.6 799.0 204.7C804.4 206.8 805.2 209.1 812.0 212.0C818.8 214.9 832.0 215.7 840.0 222.0C848.0 228.3 856.7 240.0 860.0 250.0C863.3 260.0 858.3 271.2 860.0 282.0C861.7 292.8 867.5 303.7 870.0 315.0C872.5 326.3 875.0 340.0 875.0 350.0C875.0 360.0 873.8 368.7 870.0 375.0C866.2 381.3 857.3 383.5 852.0 388.0C846.7 392.5 840.5 394.6 838.0 402.0C835.5 409.4 839.0 423.6 837.0 432.5C835.0 441.4 830.0 447.6 825.7 455.2C821.5 462.8 817.2 471.4 811.5 478.0C805.8 484.6 799.6 490.8 791.6 495.0C783.6 499.2 773.2 502.6 763.2 503.5C753.2 504.4 741.4 503.1 731.9 500.7C722.4 498.3 714.4 494.5 706.4 489.3C698.4 484.1 690.7 476.5 683.6 469.4C676.5 462.3 669.9 454.8 663.8 446.7C657.6 438.6 651.0 430.1 646.7 421.1C642.4 412.1 639.3 400.9 638.2 392.7C637.1 384.5 638.4 377.4 640.0 372.0C641.6 366.6 647.1 363.7 648.0 360.0C648.9 356.3 647.5 354.3 645.2 349.9C642.9 345.5 637.2 340.3 634.2 333.4C631.2 326.5 628.2 317.4 627.3 308.7C626.4 300.0 626.2 289.8 628.7 281.2C631.2 272.6 639.7 263.8 642.0 257.0Z" fill="#8a8a8a" filter="url(#b3)"/>
<ellipse cx="795.0" cy="295.0" rx="42.0" ry="58.0" fill="#828282" transform="rotate(0 795.0 295.0)" filter="url(#b5)"/>
<ellipse cx="750.0" cy="420.0" rx="50.0" ry="26.0" fill="#7e7e7e" transform="rotate(0 750.0 420.0)" filter="url(#b5)"/>
<ellipse cx="745.0" cy="248.0" rx="32.0" ry="10.0" fill="#666666" transform="rotate(8 745.0 248.0)" filter="url(#b3)"/>
<ellipse cx="807.0" cy="263.0" rx="10.0" ry="6.0" fill="#4c4c4c" transform="rotate(35 807.0 263.0)" filter="url(#b2)"/>
<ellipse cx="688.0" cy="338.0" rx="12.0" ry="34.0" fill="#6e6e6e" transform="rotate(-8 688.0 338.0)" filter="url(#b3)"/>
<ellipse cx="690.0" cy="362.0" rx="8.0" ry="12.0" fill="#545454" transform="rotate(-20 690.0 362.0)" filter="url(#b2)"/>
<ellipse cx="684.0" cy="392.0" rx="6.0" ry="15.0" fill="#616161" transform="rotate(-5 684.0 392.0)" filter="url(#b2)"/>
<ellipse cx="684.0" cy="421.0" rx="5.0" ry="4.0" fill="#545454" transform="rotate(0 684.0 421.0)" filter="url(#b2)"/>
<ellipse cx="664.0" cy="264.0" rx="20.0" ry="11.0" fill="#666666" transform="rotate(-20 664.0 264.0)" filter="url(#b3)"/>
<ellipse cx="651.0" cy="314.0" rx="16.0" ry="36.0" fill="#999999" transform="rotate(-12 651.0 314.0)" filter="url(#b3)"/>
<ellipse cx="660.0" cy="398.0" rx="9.0" ry="30.0" fill="#999999" transform="rotate(-8 660.0 398.0)" filter="url(#b3)"/>
<ellipse cx="745.0" cy="468.0" rx="64.0" ry="27.0" fill="#9d9d9d" transform="rotate(-8 745.0 468.0)" filter="url(#b5)"/>
<ellipse cx="722.0" cy="213.0" rx="62.0" ry="24.0" fill="#999999" transform="rotate(5 722.0 213.0)" filter="url(#b5)"/>
<path d="M642.4 262.0C642.4 258.4 641.5 247.2 642.4 240.4C643.3 233.6 645.1 227.1 647.9 221.2C650.6 215.2 654.3 210.0 658.9 204.7C663.5 199.4 669.0 193.7 675.4 189.6C681.8 185.5 690.1 181.8 697.4 180.0C704.7 178.2 712.0 177.9 719.3 178.6C726.6 179.3 734.4 181.8 741.3 184.1C748.2 186.4 754.1 189.8 760.5 192.3C766.9 194.8 773.4 197.1 779.8 199.2C786.2 201.3 795.8 203.8 799.0 204.7" fill="none" stroke="#6b6b6b" stroke-width="7" stroke-linecap="round" filter="url(#b2)"/>
<path d="M646.0 258.0C650.0 257.3 662.3 256.3 670.0 254.0C677.7 251.7 684.7 246.6 692.0 244.0C699.3 241.4 706.7 239.1 714.0 238.6C721.3 238.1 729.7 239.8 736.0 241.0C742.3 242.2 745.7 243.8 752.0 246.0C758.3 248.2 767.1 251.7 774.0 254.0C780.9 256.3 788.0 258.2 793.5 259.6C799.0 261.0 804.8 261.9 807.0 262.4" fill="none" stroke="#6b6b6b" stroke-width="8" stroke-linecap="round" filter="url(#b3)"/>
<path d="M642.4 256.5C640.2 260.6 631.9 272.5 629.5 281.2C627.1 289.9 627.0 300.0 627.8 308.7C628.6 317.4 631.3 326.5 634.2 333.4C637.1 340.3 642.7 345.1 645.2 349.9C647.8 354.7 649.9 357.0 649.5 362.0C649.1 367.0 644.4 373.7 643.0 380.0C641.6 386.3 640.4 393.1 641.0 400.0C641.6 406.9 645.8 417.6 646.7 421.1" fill="none" stroke="#666666" stroke-width="7" stroke-linecap="round" filter="url(#b2)"/>
<path d="M586.0 366.5C589.7 366.2 600.7 365.4 608.0 364.5C615.3 363.6 623.3 362.6 630.0 361.0C636.7 359.4 645.0 356.0 648.0 355.0" fill="none" stroke="#808080" stroke-width="4" stroke-linecap="round" filter="url(#b2)"/>
<path d="M646.7 421.1C649.6 425.4 657.6 438.6 663.8 446.7C669.9 454.8 676.5 462.3 683.6 469.4C690.7 476.5 698.4 484.1 706.4 489.3C714.4 494.5 722.4 498.3 731.9 500.7C741.4 503.1 753.2 504.4 763.2 503.5C773.2 502.6 783.6 499.2 791.6 495.0C799.6 490.8 805.8 484.6 811.5 478.0C817.2 471.4 821.8 462.4 825.7 455.2C829.6 448.0 833.5 438.4 835.0 435.0" fill="none" stroke="#6f6f6f" stroke-width="10" stroke-linecap="round" filter="url(#b3)"/>
</g></g>
<circle cx="718.8" cy="213.8" r="4.9" fill="#fff" stroke="#5aa2ee" stroke-width="1.6"/><circle cx="718.8" cy="213.8" r="3.9" fill="none" stroke="#9a9a9a" stroke-width="0.5"/>
<circle cx="665.0" cy="293.9" r="4.9" fill="#fff" stroke="#5aa2ee" stroke-width="1.6"/><circle cx="665.0" cy="293.9" r="3.9" fill="none" stroke="#9a9a9a" stroke-width="0.5"/>
<circle cx="659.0" cy="301.0" r="4.9" fill="#fff" stroke="#5aa2ee" stroke-width="1.6"/><circle cx="659.0" cy="301.0" r="3.9" fill="none" stroke="#9a9a9a" stroke-width="0.5"/>
<circle cx="741.0" cy="301.0" r="4.9" fill="#fff" stroke="#5aa2ee" stroke-width="1.6"/><circle cx="741.0" cy="301.0" r="3.9" fill="none" stroke="#9a9a9a" stroke-width="0.5"/>
<circle cx="753.0" cy="368.8" r="4.9" fill="#fff" stroke="#5aa2ee" stroke-width="1.6"/><circle cx="753.0" cy="368.8" r="3.9" fill="none" stroke="#9a9a9a" stroke-width="0.5"/>
<circle cx="743.2" cy="454.9" r="4.9" fill="#fff" stroke="#5aa2ee" stroke-width="1.6"/><circle cx="743.2" cy="454.9" r="3.9" fill="none" stroke="#9a9a9a" stroke-width="0.5"/>
<rect x="586" y="116" width="1" height="1" fill="#e8e8e8"/>
<rect x="561" y="156" width="1" height="1" fill="#e8e8e8"/>
<rect x="854" y="156" width="1" height="1" fill="#e8e8e8"/>
<rect x="893" y="505" width="1" height="1" fill="#e8e8e8"/>
<rect x="635" y="147" width="1" height="1" fill="#e8e8e8"/>
<rect x="841" y="503" width="1" height="1" fill="#e8e8e8"/>
</svg>
</div><!--/canvas-->

<!-- dims slider -->
<div class="abs lbl" style="left:357px;top:640px">0</div>
<div class="abs pb" style="left:375px"><svg width="15" height="15" viewBox="0 0 15 15"><path d="M4.4 2.8L10.6 7.6L4.4 12.4Z" fill="#d8d9da"/></svg></div>
<div class="abs pb" style="left:394px;width:13px"><svg width="13" height="15" viewBox="0 0 13 15"><path d="M3 3.4h1.3v8.4H3zM10 3.4V11.8L4.3 7.6Z" fill="#d8d9da"/></svg></div>
<div class="abs pb" style="left:983px;width:13px"><svg width="13" height="15" viewBox="0 0 13 15"><path d="M10 3.4H8.7v8.4H10zM3 3.4V11.8L8.7 7.6Z" fill="#d8d9da"/></svg></div>
<div class="abs" style="left:1041px;top:641px;width:1px;height:14px;background:#999b9e"></div>
<div class="abs" style="left:410px;top:641px;width:570px;height:15px;background:#8a8c8f;border-radius:2px"></div>
<div class="abs" style="left:682px;top:642px;width:26px;height:12px;background:#9a9ea3;border-radius:2px"></div>
<div class="abs lbl dim num" style="left:1002px;top:640px">1274</div>
<div class="abs lbl dim num" style="left:1049.5px;top:640px">2549</div>

<!-- status -->
<div class="abs lbl st" style="left:487px;top:668px">use &lt;4&gt; for pan/zoom, use &lt;5&gt; for transform, use &lt;2&gt; for add points</div>
<svg class="abs" style="left:990px;top:673px" width="9" height="6" viewBox="0 0 9 6"><path d="M0.4 5.2L4.5 0.8L8.6 5.2Z" fill="#c4c5c7"/></svg>
<div class="abs lbl" style="left:1002px;top:669px;font-size:15.8px">activity</div>
<svg class="abs" style="left:270px;top:12px" width="24" height="34" viewBox="0 0 24 34"><path d="M5.4 6.2V27.2L10.2 22.8L13.6 30L16 28.8L12.8 21.8L19 21.4Z" fill="#fff" stroke="#8a8a8a" stroke-width="0.6" stroke-linejoin="round"/><path d="M5.6 6.4L19.2 21.5L13 21.9" fill="none" stroke="#5a5a5a" stroke-width="1.5" stroke-linejoin="round"/></svg>
</div>
</body>
</html>
